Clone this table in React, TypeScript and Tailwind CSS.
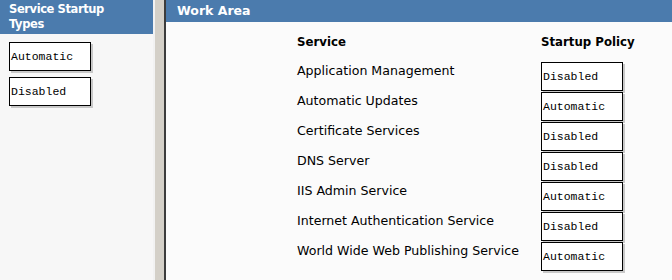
const SERVICES: { name: string; policy: string }[] = [
  { name: 'Application Management', policy: 'Disabled' },
  { name: 'Automatic Updates', policy: 'Automatic' },
  { name: 'Certificate Services', policy: 'Disabled' },
  { name: 'DNS Server', policy: 'Disabled' },
  { name: 'IIS Admin Service', policy: 'Automatic' },
  { name: 'Internet Authentication Service', policy: 'Disabled' },
  { name: 'World Wide Web Publishing Service', policy: 'Automatic' },
];

const sans = "font-['DejaVu_Sans',Verdana,sans-serif]";
const mono = "font-['Liberation_Mono','Courier_New',monospace]";

function PolicyBox({ label }: { label: string }) {
  return (
    <div
      className={`w-[82px] h-[29px] border border-black bg-white shadow-[2px_2px_0_#c8c8c8] pl-[1px] flex items-center text-[11.5px] text-black ${mono}`}
    >
      {label}
    </div>
  );
}

export default function App() {
  return (
    <div className={`flex h-[280px] w-[672px] overflow-hidden bg-[#fbfbfb] ${sans}`}>
      {/* left: startup types */}
      <aside className="w-[153px] shrink-0 bg-[#f7f7f7]">
        <div className="h-[34px] bg-[#4b7bad] px-[9px] pt-[2px] text-[11.5px] font-bold leading-[15px] tracking-[-0.4px] text-white">
          <span className="block w-[124px]">Service Startup Types</span>
        </div>
        <div className="flex flex-col gap-[6px] pl-[9px] pt-[8px]">
          <PolicyBox label="Automatic" />
          <PolicyBox label="Disabled" />
        </div>
      </aside>

      {/* splitter */}
      <div className="w-[13px] shrink-0 border-l-2 border-l-[#f2f2f2] border-r-2 border-r-[#3c3c3c] bg-[#d4d0c8]" />

      {/* right: work area */}
      <main className="flex-1 bg-[#fbfbfb]">
        <div className="h-[22px] bg-[#4b7bad] pl-[11px] flex items-center text-[12.5px] font-bold text-white">
          Work Area
        </div>
        <div className="grid grid-cols-[244px_auto] pl-[131px] text-[12.6px] text-black">
          <div className="h-[40px] pt-[12px] font-bold text-[11.75px]">Service</div>
          <div className="h-[40px] pt-[12px] font-bold text-[11.75px]">Startup Policy</div>
          {SERVICES.map((s) => (
            <div key={s.name} className="contents">
              <div className="h-[30px] pt-[1px] leading-[16px]">{s.name}</div>
              <div className="h-[30px]">
                <PolicyBox label={s.policy} />
              </div>
            </div>
          ))}
        </div>
      </main>
    </div>
  );
}
